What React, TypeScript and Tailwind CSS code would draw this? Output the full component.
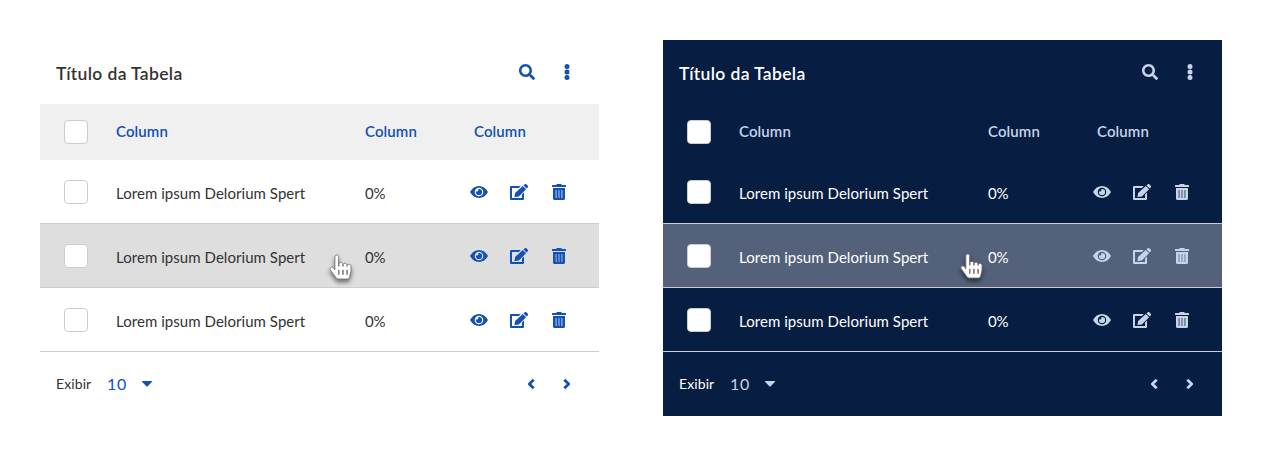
import React from "react";
import { FaSearch, FaHandPointer } from "react-icons/fa";

type Theme = {
  card: string;
  text: string;
  title: string;
  accent: string;
  header: string;
  hover: string;
  cursor: string;
};

const light: Theme = {
  card: "bg-white",
  text: "text-[#333333]",
  title: "font-semibold tracking-[0.36px]",
  accent: "text-[#1351b4]",
  header: "bg-[#f0f0f0]",
  hover: "bg-[#dedede]",
  cursor: "left-[290px] top-[31px]",
};

const dark: Theme = {
  card: "bg-[#071d41]",
  text: "text-white",
  title: "font-semibold tracking-[0.36px]",
  accent: "text-[#c5d4eb]",
  header: "bg-[#071d41]",
  hover: "bg-[#53617a]",
  cursor: "left-[298px] top-[30px]",
};

function Eye() {
  return (
    <svg viewBox="0 0 18 16" className="h-4 w-[18px]" fill="currentColor">
      <path
        fillRule="evenodd"
        d="M0 8C2 4.200 5.200 2 9 2s7 2.200 9 6c-2 3.800-5.200 6-9 6S2 11.800 0 8Zm9-4.300a4.300 4.300 0 1 0 0 8.600a4.300 4.300 0 1 0 0-8.600Zm0 1.200a3.100 3.100 0 1 1-3.100 3.100c0-.3 0-.5.1-.7a1.600 1.600 0 0 0 2.200-2.200c.3-.1.500-.2.800-.2Z"
      />
    </svg>
  );
}

function Edit() {
  return (
    <svg viewBox="0 0 18 16" className="ml-[22px] h-4 w-[18px]" fill="currentColor">
      <path d="M1 2h9.700L8.900 4H2v10h10v-3.600l2-2V15a1 1 0 0 1-1 1H1a1 1 0 0 1-1-1V3a1 1 0 0 1 1-1Z" />
      <path d="m12.800 1.900 3.300 3.300-7.300 7.300-3.600.6a.6.6 0 0 1-.7-.7l.6-3.400 7.700-7.100Z" />
      <path d="m13.500 1.400 1-1a1.400 1.400 0 0 1 2 0l1.100 1.100a1.400 1.400 0 0 1 0 2l-1 1-3.100-3.100Z" />
    </svg>
  );
}

function Trash() {
  return (
    <svg viewBox="0 0 14 16" className="ml-6 h-4 w-[14px]" fill="currentColor">
      <path d="M0 1.500A.5.500 0 0 1 .5 1H4l.6-.7a1 1 0 0 1 .7-.3h3.400a1 1 0 0 1 .7.300L10 1h3.500a.5.500 0 0 1 .5.500V3H0V1.500Z" />
      <path
        fillRule="evenodd"
        d="M1 4h12v10.500a1.500 1.500 0 0 1-1.500 1.500h-9A1.500 1.500 0 0 1 1 14.500V4Zm2.700 2v8h.7V6h-.7Zm2.950 0v8h.7V6h-.7Zm2.950 0v8h.7V6h-.7Z"
      />
    </svg>
  );
}

function Dots() {
  return (
    <svg viewBox="0 0 6 16" className="h-4 w-[6px]" fill="currentColor">
      <circle cx="3" cy="2.500" r="2.500" />
      <circle cx="3" cy="8" r="2.500" />
      <circle cx="3" cy="13.500" r="2.500" />
    </svg>
  );
}

function Chevron({ flip }: { flip?: boolean }) {
  return (
    <svg
      viewBox="0 0 8 12"
      className={flip ? "h-3 w-2 -scale-x-100" : "h-3 w-2"}
      fill="none"
      stroke="currentColor"
      strokeWidth="2.800"
      strokeLinejoin="round"
    >
      <path d="M6.700 1.700 2.300 6l4.400 4.300" />
    </svg>
  );
}

function Checkbox() {
  return (
    <span
      role="checkbox"
      aria-checked="false"
      className="block size-6 shrink-0 rounded-[4px] border border-[#cccccc] bg-white"
    />
  );
}

function Row({ theme, active }: { theme: Theme; active: boolean }) {
  return (
    <div className={`relative flex h-16 border-b border-[#cccccc] pt-5 pl-6 ${active ? theme.hover : ""}`}>
      <Checkbox />
      <span className={`ml-7 w-[249px] pt-[3px] text-[15px] leading-5 tracking-[0.05px] whitespace-nowrap ${theme.text}`}>
        Lorem ipsum Delorium Spert
      </span>
      <span className={`w-[105px] pt-[3px] text-[15px] leading-5 tracking-[-0.2px] ${theme.text}`}>0%</span>
      <span className={`flex h-6 items-center ${theme.accent}`}>
        <Eye />
        <Edit />
        <Trash />
      </span>
      {active && (
        <FaHandPointer
          className={`absolute h-6 w-[21px] overflow-visible fill-white stroke-[#777777] stroke-[20px] drop-shadow-[0_3px_2px_rgba(0,0,0,0.5)] ${theme.cursor}`}
        />
      )}
    </div>
  );
}

function TableCard({ theme }: { theme: Theme }) {
  return (
    <section className={`h-[376px] w-[559px] shrink-0 ${theme.card}`}>
      <header className="flex h-16 items-center justify-between pr-[29px] pl-4">
        <h2 className={`pt-1 text-[17.5px] leading-6 ${theme.text} ${theme.title}`}>Título da Tabela</h2>
        <div className={`flex items-center gap-[29px] ${theme.accent}`}>
          <FaSearch className="size-4" />
          <Dots />
        </div>
      </header>
      <div className={`flex h-14 items-center pl-6 text-[15px] leading-5 font-semibold tracking-[0.1px] ${theme.header} ${theme.accent}`}>
        <Checkbox />
        <span className="ml-7 w-[249px] pb-0.5">Column</span>
        <span className="w-[109px] pb-0.5">Column</span>
        <span className="pb-0.5">Column</span>
      </div>
      {[false, true, false].map((active, index) => (
        <Row key={index} theme={theme} active={active} />
      ))}
      <footer className="flex h-16 items-center pr-7 pl-4">
        <span className={`w-[51px] text-[14px] leading-5 tracking-[0.1px] ${theme.text}`}>Exibir</span>
        <span className={`w-[35px] text-[16px] leading-6 tracking-[0.6px] ${theme.accent}`}>10</span>
        <svg viewBox="0 0 10 6" className={`h-[6px] w-[10px] ${theme.accent}`} fill="currentColor">
          <path d="M.7 0h8.600c.7 0 .9.700.5 1.100L5.700 5.300a1 1 0 0 1-1.400 0L.2 1.100C-.2.700 0 0 .7 0Z" />
        </svg>
        <span className={`ml-auto flex gap-7 ${theme.accent}`}>
          <Chevron />
          <Chevron flip />
        </span>
      </footer>
    </section>
  );
}

export default function App() {
  return (
    <main className="flex h-[456px] w-[1261px] gap-16 overflow-hidden bg-white p-10 font-[Lato,sans-serif]">
      <TableCard theme={light} />
      <TableCard theme={dark} />
    </main>
  );
}
